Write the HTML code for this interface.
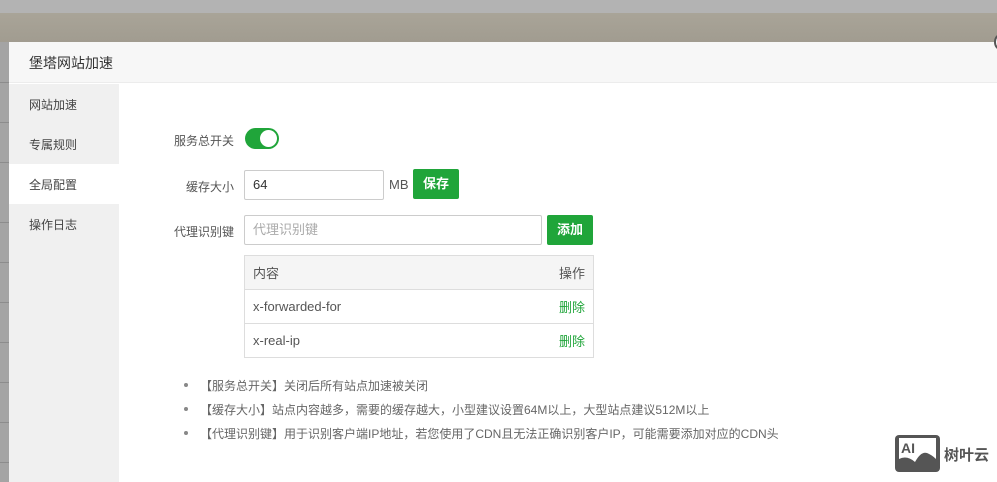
<!DOCTYPE html>
<html><head><meta charset="utf-8"><style>
*{box-sizing:border-box;margin:0;padding:0}
body{width:997px;height:482px;overflow:hidden;position:relative;background:#fff;font-family:"Liberation Sans","Noto Sans CJK SC",sans-serif;font-size:12px;color:#555}
.top{position:absolute;left:0;top:0;width:997px;height:13px;background:#b3b3b3}
.band{position:absolute;left:0;top:13px;width:997px;height:29px;background:linear-gradient(#a9a498,#a19c90)}
.left{position:absolute;left:0;top:42px;width:9px;height:440px;background:#a4a4a4}
.left i{position:absolute;left:0;width:9px;height:1px;background:#8c8c8c}
.modal{position:absolute;left:9px;top:42px;width:988px;height:440px;background:#fff}
.hd{height:41px;background:#f7f7f7;border-bottom:1px solid #ececec;padding-left:20px;line-height:42px;font-size:14px;color:#333}
.side{position:absolute;left:0;top:42px;width:110px;height:398px;background:#f0f0f0}
.side div{height:40px;line-height:42px;padding-left:20px;font-size:12px;color:#444}
.side .on{background:#fff}
.lbl{position:absolute;font-size:12px;color:#555;text-align:right;width:100px}
.inp{position:absolute;border:1px solid #ccc;border-radius:2px;font-size:13px;padding-left:8px;color:#333}
.btn{position:absolute;background:#20a53a;color:#fff;font-size:13px;font-weight:bold;text-align:center;border-radius:2px}
table{position:absolute;left:235px;top:213px;width:350px;border-collapse:collapse;font-size:13px;border:1px solid #ddd}
td{border-top:1px solid #ddd;height:34px;padding:0 8px;color:#555}
.g{color:#20a53a;text-align:right}
ul{position:absolute;left:175px;top:335px;list-style:none}
li{height:24px;line-height:18px;font-size:12px;color:#666;position:relative;padding-left:16px}
li:before{content:"";position:absolute;left:0;top:6px;width:4px;height:4px;border-radius:2px;background:#888}
</style></head><body>
<div class="top"></div><div class="band"></div>
<div class="left"><i style="top:40px"></i><i style="top:80px"></i><i style="top:120px"></i><i style="top:180px"></i><i style="top:220px"></i><i style="top:260px"></i><i style="top:300px"></i><i style="top:340px"></i><i style="top:380px"></i><i style="top:420px"></i></div>
<div class="modal">
<div class="hd">堡塔网站加速</div>
<div class="side"><div>网站加速</div><div>专属规则</div><div class="on">全局配置</div><div>操作日志</div></div>
<div class="lbl" style="left:125px;top:90px">服务总开关</div>
<div style="position:absolute;left:236px;top:86px;width:34px;height:21px;border-radius:11px;background:#20a53a"><div style="position:absolute;right:2px;top:2px;width:17px;height:17px;border-radius:50%;background:#fff"></div></div>
<div class="lbl" style="left:125px;top:136px">缓存大小</div>
<div class="inp" style="left:235px;top:128px;width:140px;height:30px;line-height:28px">64</div>
<div style="position:absolute;left:380px;top:135px;font-size:13px;color:#555">MB</div>
<div class="btn" style="left:404px;top:127px;width:46px;height:30px;line-height:30px">保存</div>
<div class="lbl" style="left:125px;top:181px">代理识别键</div>
<div class="inp" style="left:235px;top:173px;width:298px;height:30px;line-height:28px;color:#aaa">代理识别键</div>
<div class="btn" style="left:538px;top:173px;width:46px;height:30px;line-height:30px">添加</div>
<table>
<tr style="background:#f5f5f5"><td>内容</td><td style="text-align:right">操作</td></tr>
<tr><td>x-forwarded-for</td><td class="g">删除</td></tr>
<tr><td>x-real-ip</td><td class="g">删除</td></tr>
</table>
<ul>
<li>【服务总开关】关闭后所有站点加速被关闭</li>
<li>【缓存大小】站点内容越多，需要的缓存越大，小型建议设置64M以上，大型站点建议512M以上</li>
<li>【代理识别键】用于识别客户端IP地址，若您使用了CDN且无法正确识别客户IP，可能需要添加对应的CDN头</li>
</ul>
</div>
<div style="position:absolute;left:994px;top:34px;width:12px;height:16px;border-radius:50%;background:#fff;border:2px solid #555"></div>
<svg style="position:absolute;left:895px;top:435px" width="45" height="37" viewBox="0 0 45 37"><rect x="0" y="0" width="45" height="37" rx="4" fill="#555"/><rect x="4" y="3" width="37" height="30" fill="#fff"/><text x="6" y="18" font-family="Liberation Sans" font-weight="bold" font-size="14" fill="#555">AI</text><path d="M4 33 L4 24 Q12 20 20 27 Q26 16 32 18 Q37 20 41 24 L41 33Z" fill="#555"/></svg>
<div style="position:absolute;left:944px;top:444px;font-size:15px;font-weight:bold;color:#555">树叶云</div>
</body></html>
